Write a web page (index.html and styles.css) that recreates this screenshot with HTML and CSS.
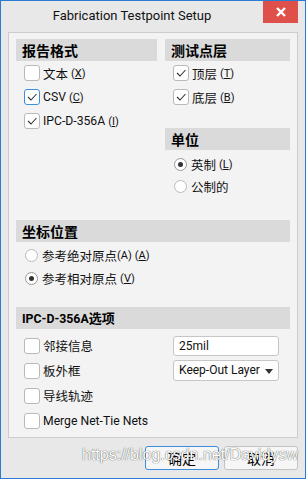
FILE: index.html
```html
<!DOCTYPE html>
<html>
<head>
  <meta charset="UTF-8">
  <title>Fabrication Testpoint Setup</title>
  <link rel="stylesheet" href="styles.css">
</head>
<body>
  <div class="window">
    <div class="titlebar">
      <div class="title">Fabrication Testpoint Setup</div>
      <div class="close-button">
        <svg width="10" height="10" viewBox="0 0 10 10">
          <path d="M1 1 L9 9 M9 1 L1 9" stroke="#fff" stroke-width="2.4"/>
        </svg>
      </div>
    </div>

    <div class="panel">
      <div class="columns">
        <div class="column">
          <div class="group-head">报告格式</div>
          <div class="row"><span class="box"></span>文本 <span class="key">(<u>X</u>)</span></div>
          <div class="row"><span class="box focused"><svg width="14" height="14" viewBox="0 0 14 14"><path d="M3 7 L6 10 L11.5 4" fill="none" stroke="#333" stroke-width="1.1"/></svg></span><span class="lat">CSV</span> <span class="key">(<u>C</u>)</span></div>
          <div class="row"><span class="box"><svg width="14" height="14" viewBox="0 0 14 14"><path d="M3 7 L6 10 L11.5 4" fill="none" stroke="#333" stroke-width="1.1"/></svg></span><span class="lat">IPC-D-356A</span> <span class="key">(<u>I</u>)</span></div>
        </div>
        <div class="column">
          <div class="group-head">测试点层</div>
          <div class="row"><span class="box"><svg width="14" height="14" viewBox="0 0 14 14"><path d="M3 7 L6 10 L11.5 4" fill="none" stroke="#333" stroke-width="1.1"/></svg></span>顶层 <span class="key">(<u>T</u>)</span></div>
          <div class="row"><span class="box"><svg width="14" height="14" viewBox="0 0 14 14"><path d="M3 7 L6 10 L11.5 4" fill="none" stroke="#333" stroke-width="1.1"/></svg></span>底层 <span class="key">(<u>B</u>)</span></div>

          <div class="group-head unit-head">单位</div>
          <div class="radio-list">
            <div class="radio-row"><span class="radio checked"></span>英制 <span class="key">(<u>L</u>)</span></div>
            <div class="radio-row"><span class="radio"></span>公制的</div>
          </div>
        </div>
      </div>

      <div class="group-head coord-head">坐标位置</div>
      <div class="radio-list coord-list">
        <div class="radio-row tall"><span class="radio"></span>参考绝对原点<span class="key tight">(A)</span> <span class="key">(<u>A</u>)</span></div>
        <div class="radio-row tall"><span class="radio checked"></span>参考相对原点 <span class="key">(<u>V</u>)</span></div>
      </div>

      <div class="group-head ipc-head"><span class="ipc-lat">IPC-D-356A</span>选项</div>
      <div class="options">
        <div class="row opt"><span class="box"></span>邻接信息</div>
        <div class="opt-field"><input class="text-input" type="text" value="25mil"></div>
        <div class="row opt"><span class="box"></span>板外框</div>
        <div class="opt-field">
          <div class="select">Keep-Out Layer<span class="caret"></span></div>
        </div>
        <div class="row opt"><span class="box"></span>导线轨迹</div>
        <div></div>
        <div class="row opt"><span class="box"></span><span class="lat">Merge Net-Tie Nets</span></div>
        <div></div>
      </div>
    </div>

    <div class="buttons">
      <button class="btn default">确定</button>
      <button class="btn">取消</button>
    </div>

    <div class="watermark">https://blog.csdn.net/Davidysw</div>
  </div>
</body>
</html>
```

FILE: styles.css
```css
body {
  margin: 0;
  font-family: Roboto, "Noto Sans CJK SC", sans-serif;
  color: #111;
}

.window {
  position: relative;
  width: 306px;
  height: 479px;
  box-sizing: border-box;
  border: 1px solid #2a7bd3;
  background-color: #e8e8e8;
  overflow: hidden;
}

.titlebar {
  display: flex;
  align-items: flex-start;
  height: 31px;
}

.title {
  flex: 1;
  text-align: center;
  font-size: 13px;
  line-height: 29px;
  color: #111;
}

.close-button {
  width: 35px;
  height: 22px;
  margin-right: 7px;
  background-color: #e0504a;
  display: flex;
  align-items: center;
  justify-content: center;
}

.panel {
  margin: 0 7px;
  border: 1px solid #cdcdcd;
  background-color: #f3f3f3;
  padding: 6px 7px 4px 7px;
}

.columns {
  display: grid;
  grid-template-columns: 141px 125px;
  column-gap: 8px;
}

.group-head {
  height: 22px;
  line-height: 22px;
  padding-left: 6px;
  background-color: #dadada;
  font-family: "Noto Sans CJK SC", sans-serif;
  font-weight: bold;
  font-size: 14px;
  color: #000;
}

.unit-head {
  margin-top: 19px;
}

.coord-head {
  margin-top: 23px;
}

.ipc-head {
  margin-top: 17px;
  font-size: 13px;
}

.ipc-lat {
  font-family: Roboto, sans-serif;
  font-size: 12.3px;
}

.row {
  display: flex;
  align-items: center;
  height: 24px;
  padding-left: 8px;
  font-size: 12.5px;
  white-space: nowrap;
}

.lat {
  font-size: 12.2px;
}

.box {
  width: 16px;
  height: 16px;
  box-sizing: border-box;
  border: 1px solid #b9b9b9;
  border-radius: 3px;
  background-color: #fff;
  margin-right: 3px;
  display: flex;
  align-items: center;
  justify-content: center;
  flex-shrink: 0;
}

.box.focused {
  border-color: #3d8ddb;
}

.key {
  font-size: 11px;
  margin-left: 3px;
}

.key.tight {
  margin-left: 0;
}

.radio-list {
  padding-top: 3px;
}

.radio-row {
  display: flex;
  align-items: center;
  height: 22px;
  padding-left: 8px;
  font-size: 12.5px;
  white-space: nowrap;
}

.radio-row.tall {
  height: 23px;
}

.coord-list {
  padding-top: 2px;
}

.radio {
  position: relative;
  width: 13px;
  height: 13px;
  box-sizing: border-box;
  border: 1px solid #bababa;
  border-radius: 50%;
  background-color: #fff;
  margin: 0 4px 0 1px;
  flex-shrink: 0;
}

.radio.checked {
  border-color: #9a9a9a;
}

.radio.checked:after {
  content: "";
  position: absolute;
  left: 3px;
  top: 3px;
  width: 5px;
  height: 5px;
  border-radius: 50%;
  background-color: #333;
}

.options {
  display: grid;
  grid-template-columns: 149px 125px;
  grid-auto-rows: 25px;
  padding-top: 4px;
}

.opt {
  height: 25px;
}

.opt-field {
  display: flex;
  align-items: center;
  padding-left: 8px;
}

.text-input {
  width: 106px;
  height: 20px;
  box-sizing: border-box;
  border: 1px solid #c6c6c6;
  border-radius: 3px;
  background-color: #fff;
  padding: 0 5px;
  font-family: Roboto, sans-serif;
  font-size: 12px;
  color: #111;
  outline: none;
}

.select {
  position: relative;
  width: 106px;
  height: 21px;
  box-sizing: border-box;
  border: 1px solid #c6c6c6;
  border-radius: 3px;
  background-color: #fdfdfd;
  padding-left: 5px;
  font-size: 12px;
  line-height: 19px;
  white-space: nowrap;
}

.caret {
  position: absolute;
  right: 5px;
  top: 8px;
  width: 0;
  height: 0;
  border-left: 4.5px solid transparent;
  border-right: 4.5px solid transparent;
  border-top: 5px solid #333;
}

.buttons {
  display: flex;
  justify-content: flex-end;
  gap: 5px;
  margin: 8px 7px 0 0;
}

.btn {
  width: 74px;
  height: 24px;
  box-sizing: border-box;
  border: 1px solid #c3c3c3;
  border-radius: 3px;
  background-color: #f6f6f6;
  font-family: "Noto Sans CJK SC", sans-serif;
  font-size: 14px;
  color: #000;
  padding: 0;
}

.btn.default {
  border-color: #3d8ddb;
}

.watermark {
  position: absolute;
  left: 81px;
  top: 445px;
  font-family: "Liberation Sans", sans-serif;
  font-size: 16px;
  color: #fff;
  text-shadow: 0 0 1px rgba(0, 0, 0, 0.6), 0 0 1px rgba(0, 0, 0, 0.4);
  white-space: nowrap;
}
```
